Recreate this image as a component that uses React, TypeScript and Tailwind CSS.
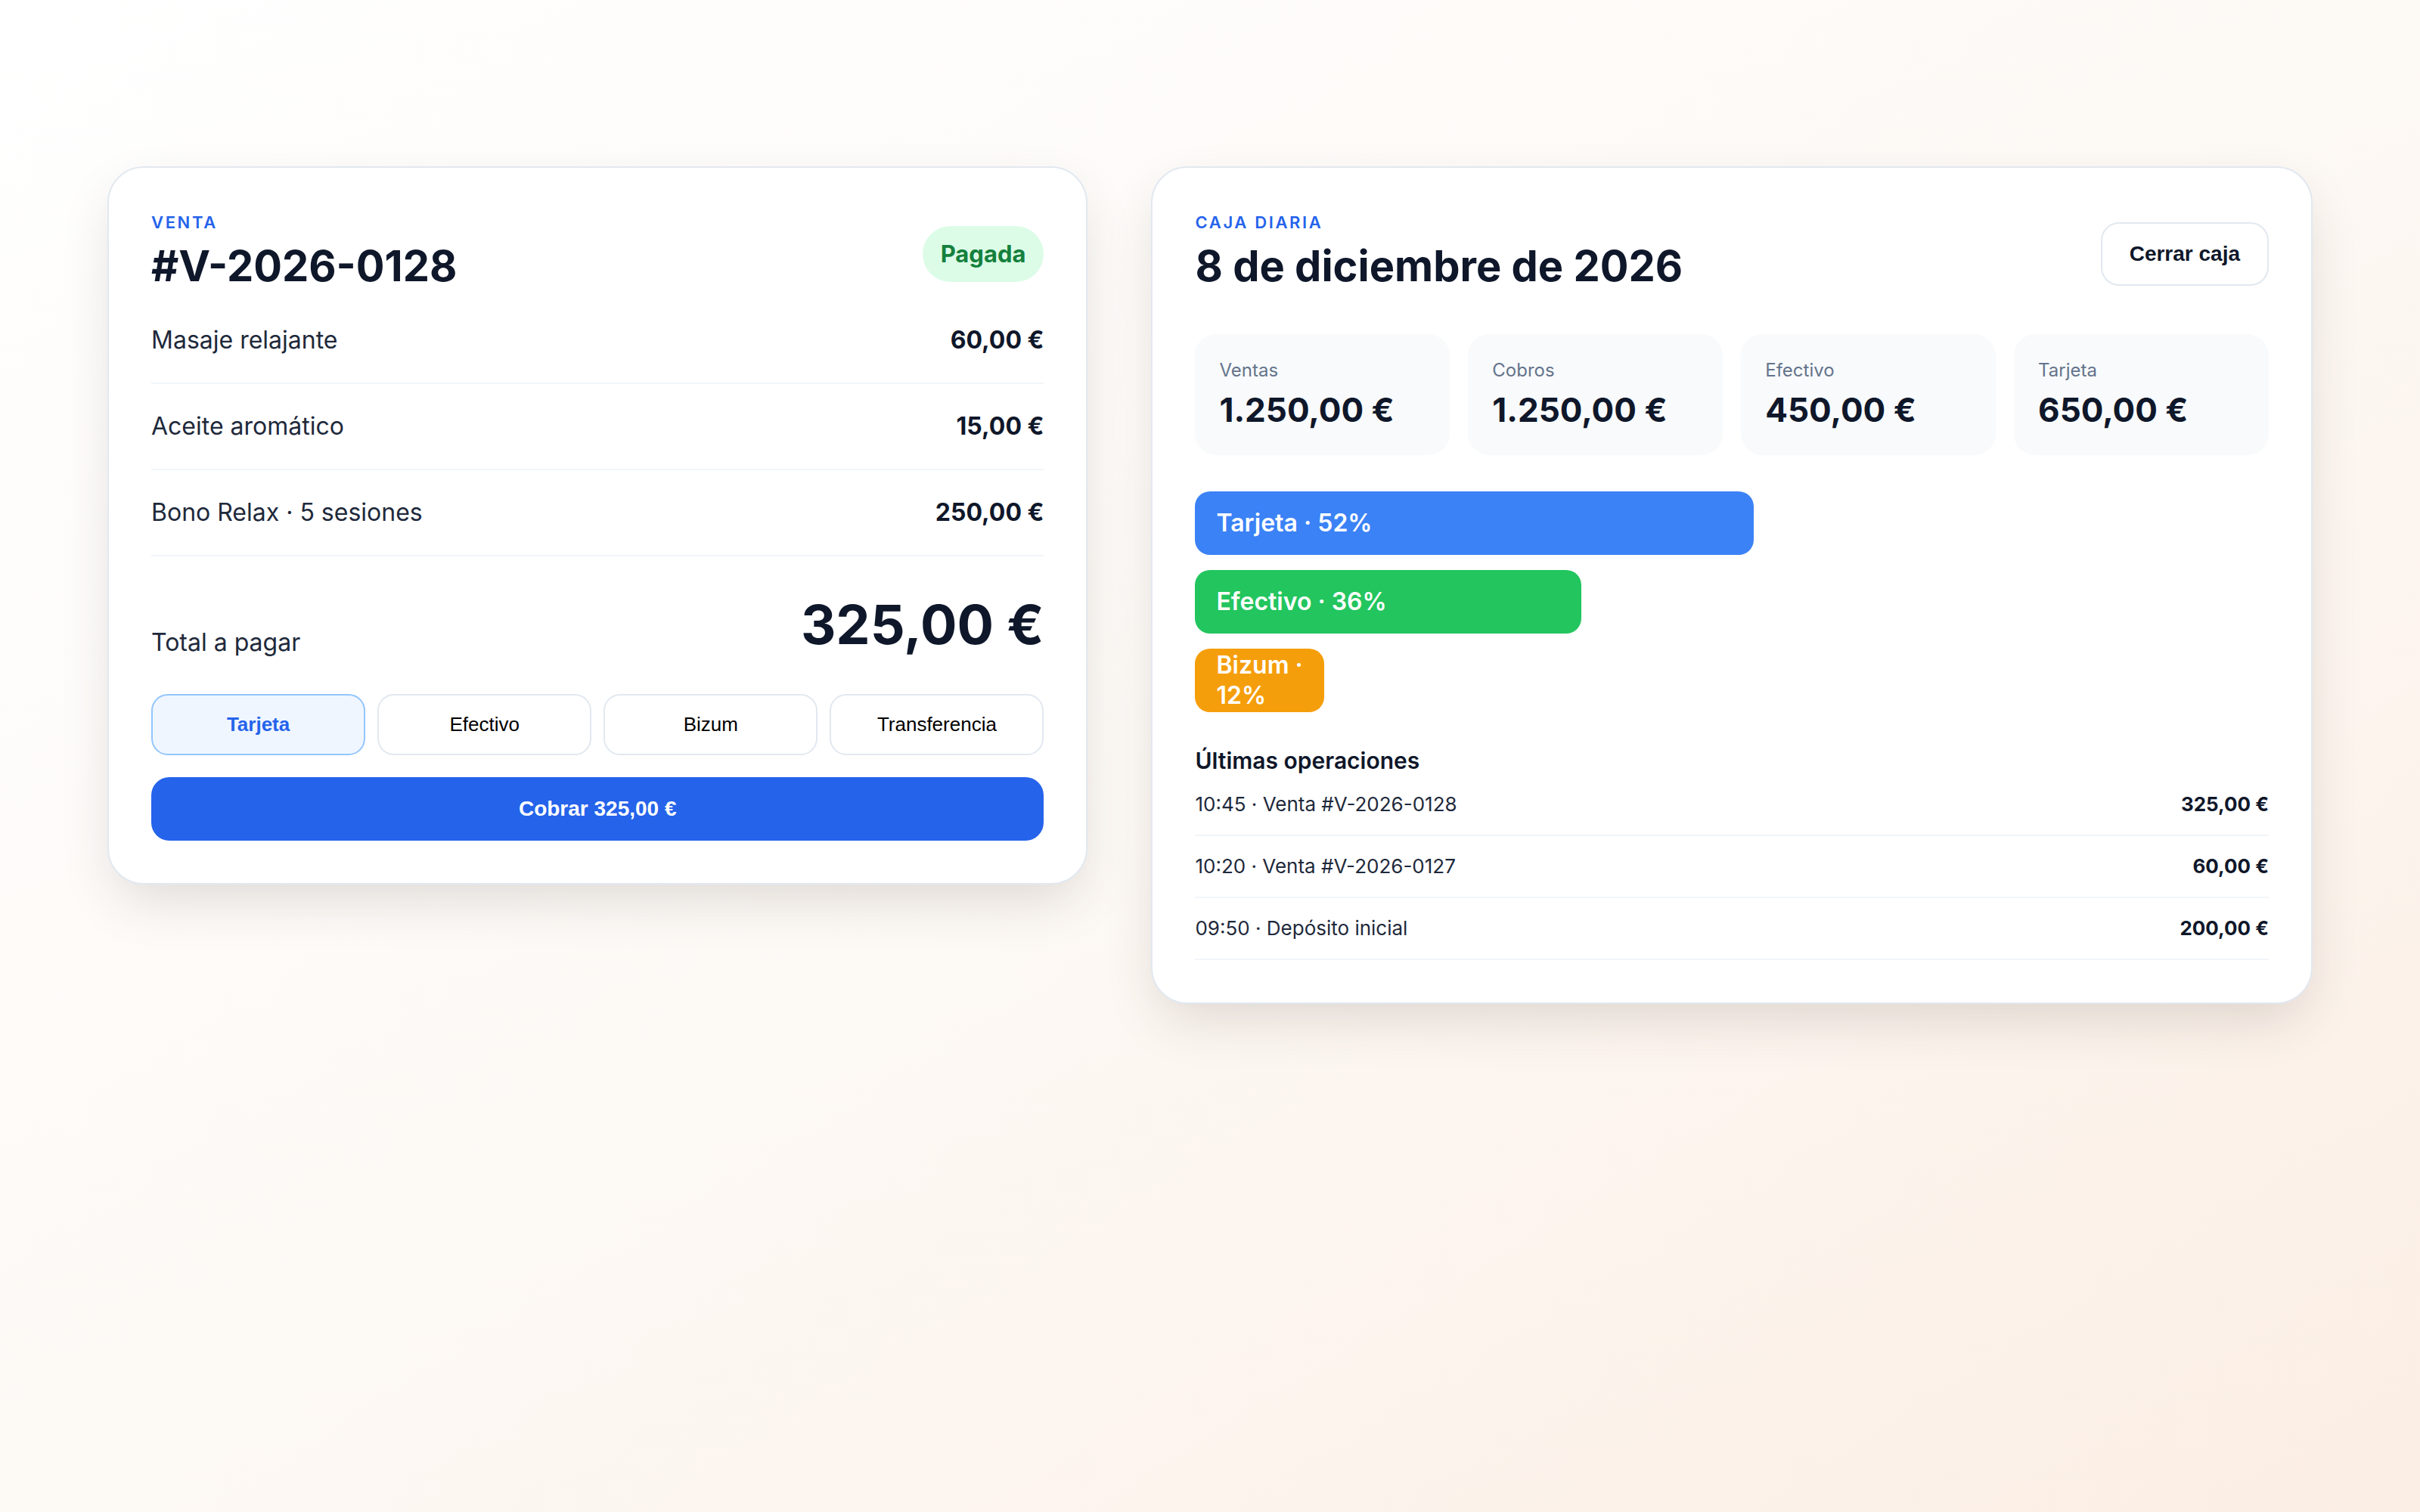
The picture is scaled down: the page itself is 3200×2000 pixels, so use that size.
import { useState } from 'react';

const items = [
  { name: 'Masaje relajante', price: '60,00 €' },
  { name: 'Aceite aromático', price: '15,00 €' },
  { name: 'Bono Relax · 5 sesiones', price: '250,00 €' },
];

const methods = ['Tarjeta', 'Efectivo', 'Bizum', 'Transferencia'];

const stats = [
  { label: 'Ventas', value: '1.250,00 €' },
  { label: 'Cobros', value: '1.250,00 €' },
  { label: 'Efectivo', value: '450,00 €' },
  { label: 'Tarjeta', value: '650,00 €' },
];

const split = [
  { label: 'Tarjeta', pct: 52, color: 'bg-[#3b82f6]' },
  { label: 'Efectivo', pct: 36, color: 'bg-[#22c55e]' },
  { label: 'Bizum', pct: 12, color: 'bg-[#f59e0b]' },
];

const operations = [
  { label: '10:45 · Venta #V-2026-0128', amount: '325,00 €' },
  { label: '10:20 · Venta #V-2026-0127', amount: '60,00 €' },
  { label: '09:50 · Depósito inicial', amount: '200,00 €' },
];

const SaleCard = () => {
  const [method, setMethod] = useState('Tarjeta');

  return (
    <section className="rounded-[48px] border-2 border-[#e2e8f0] bg-white p-14 shadow-[0_28px_70px_-12px_rgba(60,50,40,0.17)]">
      <div className="flex items-center justify-between">
        <div>
          <p className="text-[22px] font-semibold uppercase leading-8 tracking-[0.12em] text-[#2563eb]">Venta</p>
          <h2 className="mt-2 text-[56px] font-bold leading-[68px] text-[#0f172a]">#V-2026-0128</h2>
        </div>
        <span className="mt-2 rounded-full bg-[#dcfce7] px-6 py-[17px] text-[31px] font-bold leading-10 text-[#15803d]">
          Pagada
        </span>
      </div>

      <div className="mt-2">
        {items.map((item) => (
          <div
            key={item.name}
            className="flex items-center justify-between border-b-2 border-[#f1f5f9] py-8 text-[32px] leading-[48px]"
          >
            <span className="text-[#1e293b]">{item.name}</span>
            <span className="font-bold text-[#0f172a]">{item.price}</span>
          </div>
        ))}
      </div>

      <div className="flex items-end justify-between pt-[50px]">
        <span className="text-[32px] leading-8 text-[#1e293b]">Total a pagar</span>
        <span className="text-[72px] font-bold leading-[80px] text-[#0f172a]">325,00 €</span>
      </div>

      <div className="mt-[52px] grid grid-cols-4 gap-4 font-['Liberation_Sans',Arial,sans-serif]">
        {methods.map((m) => (
          <button
            key={m}
            onClick={() => setMethod(m)}
            className={
              method === m
                ? 'h-[81px] rounded-[22px] border-2 border-[#93c5fd] bg-[#eff6ff] text-[26px] font-bold text-[#2563eb]'
                : 'h-[81px] rounded-[22px] border-2 border-[#e2e8f0] bg-white text-[26px] text-black'
            }
          >
            {m}
          </button>
        ))}
      </div>

      <button className="mt-[29px] h-[84px] w-full rounded-[24px] bg-[#2563eb] font-['Liberation_Sans',Arial,sans-serif] text-[28px] font-bold text-white">
        Cobrar 325,00 €
      </button>
    </section>
  );
};

const CashCard = () => (
  <section className="rounded-[48px] border-2 border-[#e2e8f0] bg-white p-14 shadow-[0_28px_70px_-12px_rgba(60,50,40,0.17)]">
    <div className="flex items-center justify-between">
      <div>
        <p className="text-[22px] font-semibold uppercase leading-8 tracking-[0.12em] text-[#2563eb]">Caja diaria</p>
        <h2 className="mt-2 text-[56px] font-bold leading-[68px] text-[#0f172a]">8 de diciembre de 2026</h2>
      </div>
      <button className="mt-2 rounded-[24px] border-2 border-[#e2e8f0] bg-white px-9 py-5 font-['Liberation_Sans',Arial,sans-serif] text-[28px] font-bold leading-10 text-[#0f172a]">
        Cerrar caja
      </button>
    </div>

    <div className="mt-14 grid grid-cols-4 gap-6">
      {stats.map((s) => (
        <div key={s.label} className="rounded-[28px] bg-[#f8fafc] p-8">
          <p className="text-[24px] leading-8 text-[#64748b]">{s.label}</p>
          <p className="mt-2 text-[44px] font-bold leading-[56px] text-[#0f172a]">{s.value}</p>
        </div>
      ))}
    </div>

    <div className="mt-12 flex flex-col gap-5">
      {split.map((b) => (
        <div
          key={b.label}
          className={`${b.color} flex h-[84px] items-center rounded-[20px] px-7 text-[32px] font-semibold leading-10 text-white`}
          style={{ width: `${b.pct}%` }}
        >
          <span>
            {b.label} · {b.pct}%
          </span>
        </div>
      ))}
    </div>

    <h3 className="mt-[44px] text-[30px] font-semibold leading-10 text-[#0f172a]">Últimas operaciones</h3>
    <div className="-mt-[2px]">
      {operations.map((op) => (
        <div
          key={op.label}
          className="flex items-center justify-between border-b-2 border-[#f1f5f9] py-5 text-[26px] leading-10"
        >
          <span className="text-[#1e293b]">{op.label}</span>
          <span className="font-bold text-[#0f172a]">{op.amount}</span>
        </div>
      ))}
    </div>
  </section>
);

export default function App() {
  return (
    <div className="min-h-screen w-full bg-linear-to-br from-white via-[#fdf9f5] to-[#fbeee4] font-['Inter',sans-serif]">
      <div className="grid grid-cols-[1296fr_1535fr] items-start gap-[84px] px-[142px] pt-[220px]">
        <SaleCard />
        <CashCard />
      </div>
    </div>
  );
}
